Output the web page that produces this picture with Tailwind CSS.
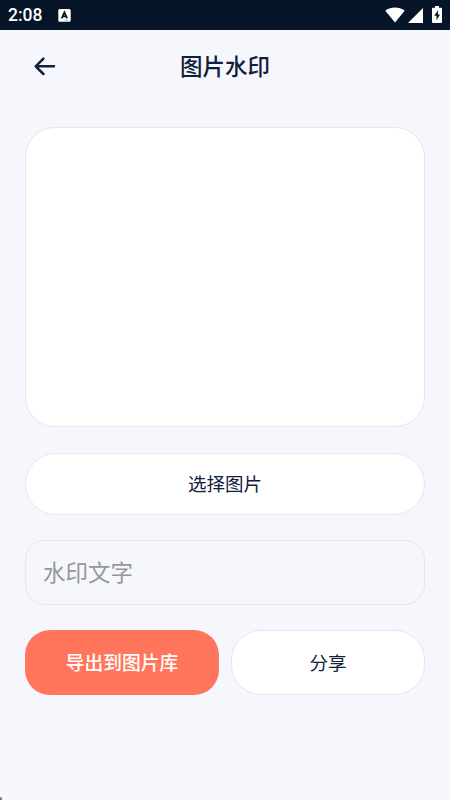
<!DOCTYPE html>
<html lang="zh-CN">
<head>
<meta charset="utf-8">
<title>图片水印</title>
<script src="https://cdn.jsdelivr.net/npm/@tailwindcss/browser@4"></script>
</head>
<body class="bg-[#f5f7fc]">
<div class="relative w-[450px] h-[800px] overflow-hidden bg-[#f5f7fc] text-[#10203a] font-['Noto_Sans_CJK_SC',sans-serif]">
  <div class="flex h-[30px] items-center bg-[#061428] pl-2 pr-[8px] text-white">
    <span class="font-[Roboto,sans-serif] text-[17.5px] font-medium leading-[30px]">2:08</span>
    <svg class="ml-4" width="13" height="13" viewBox="0 0 13 13"><rect x=".3" y=".1" width="12.4" height="12.6" rx="1.5" fill="#fff"/><path d="M3.7 9.3 6.4 3.4 9.1 9.3M4.7 7.4H8.1" fill="none" stroke="#061428" stroke-width="1.7"/><path d="M6.5 11.2H10" stroke="#9aa2ae" stroke-width=".8"/></svg>
    <svg class="ml-auto" width="20" height="16" viewBox="0 0 20 16"><path d="M.3 3.8C6-.6 14-.6 19.7 3.8L10 15.6Z" fill="#fff"/></svg>
    <svg class="ml-[3px]" width="15" height="15" viewBox="0 0 15 15"><path d="M15 0V15H0Z" fill="#fff"/></svg>
    <svg class="ml-[9px] -mt-px" width="10" height="17" viewBox="0 0 10 17"><path d="M3 0H7V1.7H9a1 1 0 0 1 1 1V16a1 1 0 0 1-1 1H1a1 1 0 0 1-1-1V2.7a1 1 0 0 1 1-1H3Z" fill="#fff"/><path d="M6.2 4 2.2 9.8H4.5V14.2L8 8.4H5.8Z" fill="#061428"/></svg>
  </div>
  <header class="grid h-[72px] grid-cols-[40px_1fr_40px] items-center px-[25px]">
    <svg class="ml-[9px]" width="22" height="20" viewBox="0 0 22 20" fill="none" stroke="#10203a" stroke-width="2.5" stroke-linecap="round" stroke-linejoin="round"><path d="M20 10.3H2M9.4 2.6 1.7 10.3 9.4 18"/></svg>
    <h1 class="pb-0.5 text-center text-[22.5px] font-medium leading-8">图片水印</h1>
  </header>
  <main class="flex flex-col px-[25px] pt-[25px]">
    <div class="h-[300px] rounded-[30px] border border-[#e5e7ed] bg-white"></div>
    <button class="mt-[26px] h-[62px] rounded-[31px] border border-[#e5e7ed] bg-white text-[18.5px]">选择图片</button>
    <input class="mt-[25px] h-[65px] rounded-[20px] border border-[#e5e7ed] px-[17px] pb-[3px] text-[22.5px] placeholder:text-[#95979b]" placeholder="水印文字">
    <div class="mt-[25px] grid grid-cols-2 gap-3">
      <button class="h-[65px] rounded-[25px] bg-[#ff765c] text-[18.75px] font-medium text-white">导出到图片库</button>
      <button class="h-[65px] rounded-[30px] border border-[#e5e7ed] bg-white text-[18.5px]">分享</button>
    </div>
  </main>
  <div class="absolute bottom-0 left-0 h-[3px] w-[2px] rounded-tr-full bg-[#77797d]"></div>
</div>
</body>
</html>
